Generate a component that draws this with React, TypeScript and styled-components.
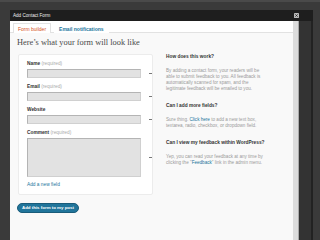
import React from "react";
import styled, { createGlobalStyle } from "styled-components";

const GlobalStyle = createGlobalStyle`
	html, body {
		margin: 0;
		padding: 0;
		background: #2f2f2f;
		font-family: "Liberation Sans", Arial, sans-serif;
	}
`;

const fields = [
	{ label: "Name", required: true, kind: "input" },
	{ label: "Email", required: true, kind: "input" },
	{ label: "Website", required: false, kind: "input" },
	{ label: "Comment", required: true, kind: "textarea" },
];

export default function App() {
	return (
		<>
			<GlobalStyle />
			<Screen>
				<Modal>
					<TitleBar>
						<Title>Add Contact Form</Title>
						<CloseIcon viewBox="0 0 6 6">
							<rect x="0" y="0" width="6" height="6" rx="1" fill="#bbb" />
							<path d="M1.6 1.6 L4.4 4.4 M4.4 1.6 L1.6 4.4" stroke="#222" strokeWidth="1" />
						</CloseIcon>
					</TitleBar>
					<Body>
						<Content>
							<Tabs>
								<Tab active>Form builder</Tab>
								<Tab>Email notifications</Tab>
							</Tabs>
							<Panel>
								<Heading>Here&rsquo;s what your form will look like</Heading>
								<Columns>
									<div>
										<FormCard>
											{fields.map((f) => (
												<Field key={f.label}>
													<Label>
														{f.label}
														{f.required && <Required> (required)</Required>}
													</Label>
													<FieldRow>
														{f.kind === "textarea" ? <TextBox /> : <InputBox />}
														<Dash />
													</FieldRow>
												</Field>
											))}
											<AddLink>Add a new field</AddLink>
										</FormCard>
										<AddButton>Add this form to my post</AddButton>
									</div>
									<Help>
										<HelpTitle>How does this work?</HelpTitle>
										<HelpText>
											By adding a contact form, your readers will be<br />
											able to submit feedback to you. All feedback is<br />
											automatically scanned for spam, and the<br />
											legitimate feedback will be emailed to you.
										</HelpText>
										<HelpTitle>Can I add more fields?</HelpTitle>
										<HelpText>
											Sure thing. <A>Click here</A> to add a new text box,<br />
											textarea, radio, checkbox, or dropdown field.
										</HelpText>
										<HelpTitle>Can I view my feedback within WordPress?</HelpTitle>
										<HelpText>
											Yep, you can read your feedback at any time by<br />
											clicking the "<A>Feedback</A>" link in the admin menu.
										</HelpText>
									</Help>
								</Columns>
							</Panel>
						</Content>
						<Scrollbar />
						<Frame />
					</Body>
				</Modal>
			</Screen>
		</>
	);
}

const Screen = styled.div`
	width: 320px;
	height: 240px;
	overflow: hidden;
	background: #3a3a3a;
	padding: 8px 7px 0 10px;
	box-sizing: border-box;
	border-top: 2px solid #4a4a4a;
`;

const Modal = styled.div`
	display: flex;
	flex-direction: column;
	height: 100%;
	background: #262626;
`;

const TitleBar = styled.div`
	height: 11px;
	display: flex;
	align-items: center;
	justify-content: space-between;
	padding: 0 14px 0 3px;
	background: #1e1e1e;
`;

const Title = styled.span`
	color: #eee;
	font-size: 4.6px;
`;

const CloseIcon = styled.svg`
	width: 5px;
	height: 5px;
`;

const Body = styled.div`
	flex: 1;
	display: flex;
	min-height: 0;
`;

const Content = styled.div`
	width: 283px;
	background: #f9f9f9;
	overflow: hidden;
`;

const Scrollbar = styled.div`
	width: 5px;
	background: #dcdcdc;
	border-right: 1px solid #aaa;
`;

const Frame = styled.div`
	flex: 1;
	background: #333;
	border-right: 2px solid #222;
`;

const Tabs = styled.div`
	height: 11px;
	display: flex;
	align-items: flex-end;
	gap: 3px;
	padding-left: 3px;
	background: #fff;
	border-bottom: 1px solid #e2e2e2;
`;

const Tab = styled.div<{ active?: boolean }>`
	height: 9px;
	padding: 0 4px;
	display: flex;
	align-items: center;
	font-size: 5px;
	font-weight: ${(p) => (p.active ? "normal" : "bold")};
	color: ${(p) => (p.active ? "#d54e21" : "#21759b")};
	background: #fff;
	border: 1px solid ${(p) => (p.active ? "#e2e2e2" : "transparent")};
	border-bottom: none;
	margin-bottom: -1px;
`;

const Panel = styled.div`
	padding: 5px 0 0 7px;
`;

const Heading = styled.h2`
	margin: 0;
	font-family: "Liberation Serif", "DejaVu Serif", serif;
	font-weight: normal;
	font-size: 8.4px;
	line-height: 10px;
	color: #4a4a4a;
`;

const Columns = styled.div`
	display: grid;
	grid-template-columns: 136px 120px;
	column-gap: 13px;
	margin-top: 6px;
`;

const FormCard = styled.div`
	margin-left: 1px;
	width: 135px;
	box-sizing: border-box;
	padding: 6px 0 6px 8px;
	background: #fff;
	border: 1px solid #ececec;
	border-radius: 2px;
`;

const Field = styled.div`
	margin-bottom: 6px;
`;

const Label = styled.div`
	font-size: 4.8px;
	line-height: 6px;
	font-weight: bold;
	color: #333;
	margin-bottom: 2px;
`;

const Required = styled.span`
	font-weight: normal;
	color: #aaa;
`;

const FieldRow = styled.div`
	display: flex;
	align-items: center;
`;

const InputBox = styled.div`
	width: 118px;
	height: 9px;
	box-sizing: border-box;
	background: #e2e2e2;
	border: 1px solid #b4b4b4;
	border-right-color: #d0d0d0;
	border-bottom-color: #d0d0d0;
`;

const TextBox = styled(InputBox)`
	height: 39px;
`;

const Dash = styled.span`
	width: 3px;
	height: 1px;
	margin-left: 8px;
	background: #777;
`;

const AddLink = styled.div`
	margin-top: -1px;
	font-size: 4.8px;
	line-height: 6px;
	color: #21759b;
`;

const AddButton = styled.div`
	display: inline-block;
	margin-top: 6px;
	padding: 0 4px;
	height: 8px;
	line-height: 8px;
	border-radius: 5px;
	background: #21759b;
	border: 0.5px solid #1a5c7a;
	color: #fff;
	font-size: 4.4px;
	font-weight: bold;
`;

const Help = styled.div`
	padding-top: 0;
`;

const HelpTitle = styled.div`
	font-size: 4.8px;
	line-height: 6px;
	font-weight: bold;
	color: #333;
	margin-bottom: 8px;
`;

const HelpText = styled.p`
	margin: 0 0 11px;
	font-size: 4.6px;
	line-height: 6px;
	color: #999;
	white-space: nowrap;
`;

const A = styled.span`
	color: #21759b;
`;
